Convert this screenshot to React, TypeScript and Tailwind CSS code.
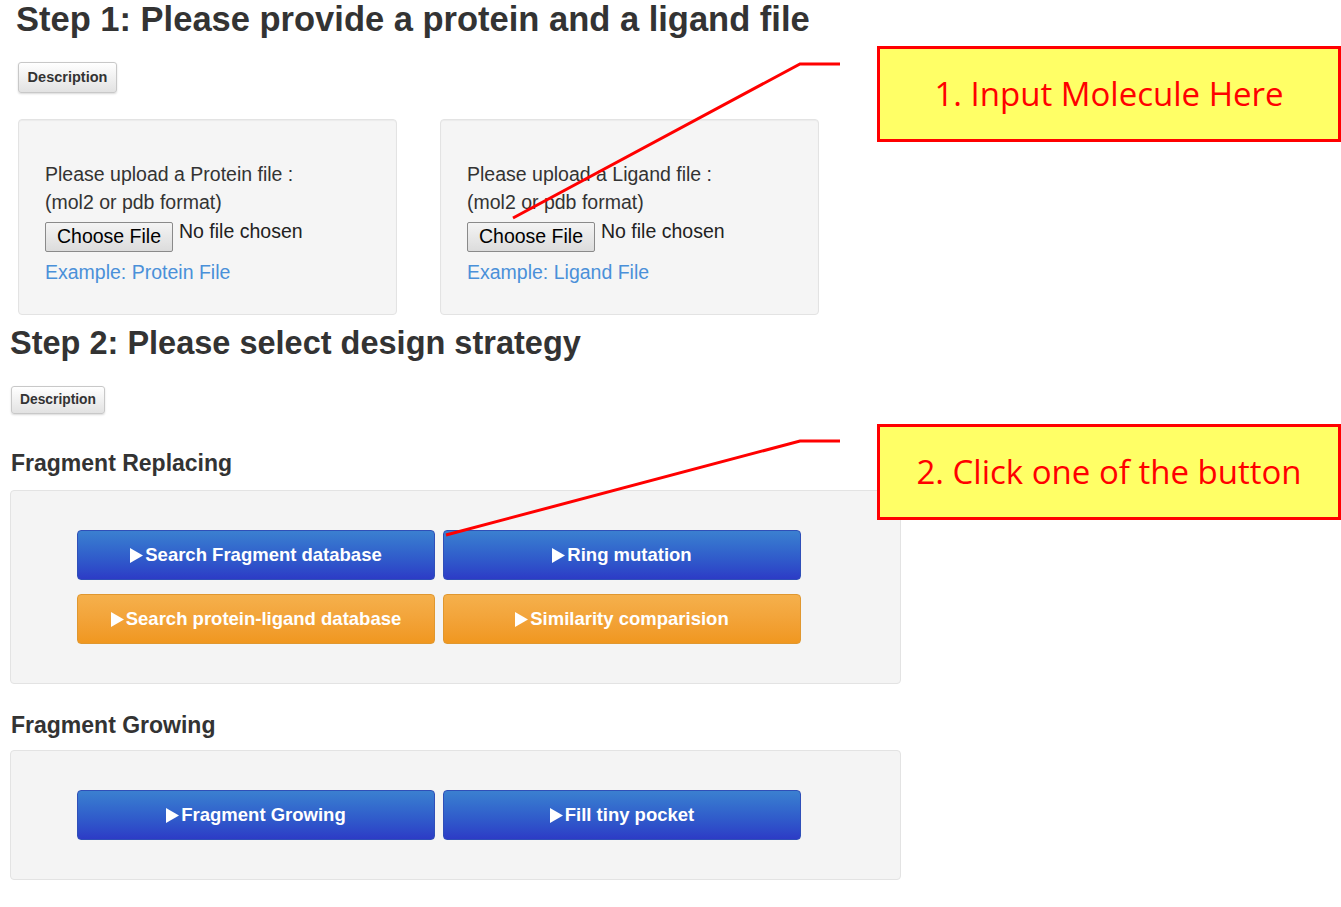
import React from 'react';

const Play = () => (
  <svg width="13" height="15" viewBox="0 0 13 15" className="mr-[2px] shrink-0">
    <path d="M0 0 L13 7.5 L0 15 Z" fill="white" />
  </svg>
);

const DescButton = ({ big }: { big?: boolean }) => (
  <button
    className={
      big
        ? 'h-[31px] w-[99px] rounded-[3px] border border-[#c8c8c8] bg-gradient-to-b from-white to-[#e2e2e2] text-[14.5px] font-bold text-[#333] shadow-[0_1px_2px_rgba(0,0,0,0.15)]'
        : 'h-[28px] w-[94px] rounded-[3px] border border-[#c8c8c8] bg-gradient-to-b from-white to-[#e2e2e2] text-[13.8px] font-bold text-[#333] shadow-[0_1px_2px_rgba(0,0,0,0.15)]'
    }
  >
    Description
  </button>
);

const UploadPanel = ({ kind }: { kind: string }) => (
  <div className="h-[196px] w-[379px] rounded-[4px] border border-[#e3e3e3] bg-[#f5f5f5] pl-[26px] pt-[40px] text-[19.5px] leading-[28px] text-[#333] shadow-[inset_0_1px_1px_rgba(0,0,0,0.04)]">
    <p>Please upload a {kind} file :</p>
    <p>(mol2 or pdb format)</p>
    <div className="mt-[6px] flex items-start">
      <span className="flex h-[30px] w-[128px] items-center justify-center rounded-[2px] border border-[#8a8a8a] bg-gradient-to-b from-[#f4f4f4] to-[#dcdcdc] text-[19.5px] leading-none text-black">
        Choose File
      </span>
      <span className="ml-[6px] -mt-[5px] text-[19.5px] leading-[28px] text-[#222]">No file chosen</span>
    </div>
    <p className="mt-[6px] text-[#4a90d9]">Example: {kind} File</p>
  </div>
);

const ActionButton = ({ label, color }: { label: string; color: 'blue' | 'orange' }) => (
  <button
    className={
      color === 'blue'
        ? 'flex h-[50px] w-[358px] items-center justify-center rounded-[4px] border border-[#2f4fb8] bg-gradient-to-b from-[#3b80d0] to-[#2d3bc6] text-[18.5px] font-bold text-white'
        : 'flex h-[50px] w-[358px] items-center justify-center rounded-[4px] border border-[#e0972f] bg-gradient-to-b from-[#f5b04c] to-[#f0971f] text-[18.5px] font-bold text-white'
    }
  >
    <Play />
    {label}
  </button>
);

const Callout = ({ text, top }: { text: string; top: string }) => (
  <div
    className={`absolute left-[877px] ${top} flex h-[96px] w-[464px] items-center justify-center border-[3px] border-[#ff0000] bg-[#ffff66] font-['Open_Sans',sans-serif] text-[33px] text-[#ff0000]`}
  >
    {text}
  </div>
);

export default function App() {
  return (
    <div className="relative h-[907px] w-[1341px] overflow-hidden bg-white font-['Liberation_Sans',Arial,sans-serif] text-[#333]">
      {/* Step 1 */}
      <section className="pl-[18px]">
        <h1 className="-ml-[2px] pt-[1px] text-[34.5px] font-bold leading-[36px] text-[#333]">
          Step 1: Please provide a protein and a ligand file
        </h1>
        <div className="mt-[25px]">
          <DescButton big />
        </div>
        <div className="mt-[26px] flex gap-[43px]">
          <UploadPanel kind="Protein" />
          <UploadPanel kind="Ligand" />
        </div>
      </section>

      {/* Step 2 */}
      <section className="pl-[10px]">
        <h2 className="mt-[10px] text-[32.5px] font-bold leading-[36px] text-[#333]">
          Step 2: Please select design strategy
        </h2>
        <div className="ml-[1px] mt-[25px]">
          <DescButton />
        </div>
        <h3 className="ml-[1px] mt-[36px] text-[23px] font-bold leading-[26px] text-[#333]">Fragment Replacing</h3>
        <div className="mt-[14px] w-[891px] rounded-[4px] border border-[#e3e3e3] bg-[#f4f4f4] py-[39px] pl-[66px]">
          <div className="grid w-[724px] grid-cols-2 gap-x-[8px] gap-y-[14px]">
            <ActionButton label="Search Fragment database" color="blue" />
            <ActionButton label="Ring mutation" color="blue" />
            <ActionButton label="Search protein-ligand database" color="orange" />
            <ActionButton label="Similarity comparision" color="orange" />
          </div>
        </div>
        <h3 className="ml-[1px] mt-[28px] text-[23px] font-bold leading-[26px] text-[#333]">Fragment Growing</h3>
        <div className="mt-[12px] w-[891px] rounded-[4px] border border-[#e3e3e3] bg-[#f4f4f4] py-[39px] pl-[66px]">
          <div className="grid w-[724px] grid-cols-2 gap-x-[8px]">
            <ActionButton label="Fragment Growing" color="blue" />
            <ActionButton label="Fill tiny pocket" color="blue" />
          </div>
        </div>
      </section>

      {/* annotations */}
      <svg className="pointer-events-none absolute left-0 top-0" width="1341" height="907">
        <polyline points="840,64 800,64 513,218" fill="none" stroke="#ff0000" strokeWidth="3" />
        <polyline points="840,441 800,441 446,535" fill="none" stroke="#ff0000" strokeWidth="3" />
      </svg>
      <Callout text="1. Input Molecule Here" top="top-[46px]" />
      <Callout text="2. Click one of the button" top="top-[424px]" />
    </div>
  );
}
